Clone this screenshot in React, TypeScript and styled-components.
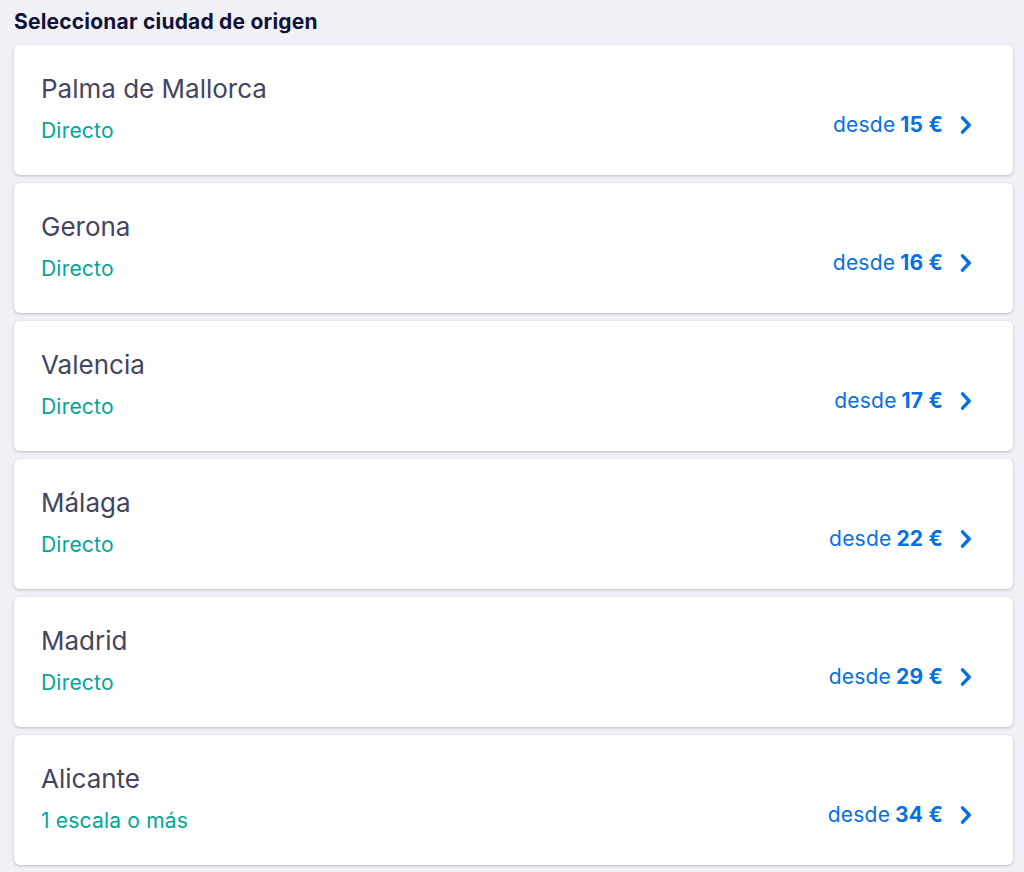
import React from 'react';
import styled, { createGlobalStyle } from 'styled-components';

const GlobalStyle = createGlobalStyle`
  html, body {
    margin: 0;
    padding: 0;
    background: #f0f1f7;
    font-family: Inter, "Noto Sans", "Liberation Sans", sans-serif;
  }
`;

interface Origin {
  city: string;
  stops: string;
  price: number;
}

const origins: Origin[] = [
  { city: 'Palma de Mallorca', stops: 'Directo', price: 15 },
  { city: 'Gerona', stops: 'Directo', price: 16 },
  { city: 'Valencia', stops: 'Directo', price: 17 },
  { city: 'Málaga', stops: 'Directo', price: 22 },
  { city: 'Madrid', stops: 'Directo', price: 29 },
  { city: 'Alicante', stops: '1 escala o más', price: 34 },
];

const Chevron: React.FC = () => (
  <ChevronSvg viewBox="0 0 12 20" aria-hidden>
    <path d="M2.5 2.8 L9.3 10 L2.5 17.2" fill="none" stroke="currentColor" strokeWidth="3.4" strokeLinecap="round" strokeLinejoin="round" />
  </ChevronSvg>
);

const OriginCard: React.FC<{ origin: Origin }> = ({ origin }) => (
  <Card>
    <Info>
      <City>{origin.city}</City>
      <Stops>{origin.stops}</Stops>
    </Info>
    <Price>
      desde <strong>{origin.price} €</strong>
      <Chevron />
    </Price>
  </Card>
);

export default function App() {
  return (
    <>
      <GlobalStyle />
      <Page>
        <Title>Seleccionar ciudad de origen</Title>
        <List>
          {origins.map((o) => (
            <OriginCard key={o.city} origin={o} />
          ))}
        </List>
      </Page>
    </>
  );
}

const Page = styled.div`
  padding: 9px 11px 7px 14px;
`;

const Title = styled.h1`
  margin: 0 0 10px;
  font-size: 21px;
  line-height: 26px;
  font-weight: 700;
  letter-spacing: 0.2px;
  color: #111236;
`;

const List = styled.div`
  display: flex;
  flex-direction: column;
  gap: 8px;
`;

const Card = styled.div`
  display: flex;
  justify-content: space-between;
  align-items: flex-end;
  height: 130px;
  box-sizing: border-box;
  padding: 28px 41px 31px 27px;
  background: #fff;
  border-radius: 6px;
  box-shadow: 0 1px 3px rgba(37, 32, 31, 0.25);
`;

const Info = styled.div`
  display: flex;
  flex-direction: column;
  align-self: stretch;
  justify-content: space-between;
`;

const City = styled.div`
  font-size: 26px;
  line-height: 32px;
  color: #444560;
`;

const Stops = styled.div`
  font-size: 21px;
  line-height: 26px;
  letter-spacing: 0.2px;
  color: #00a698;
`;

const Price = styled.div`
  display: flex;
  align-items: center;
  font-size: 21px;
  line-height: 26px;
  letter-spacing: 0.2px;
  color: #0770e3;
  margin-bottom: 6px;

  strong {
    font-weight: 700;
    margin-left: 5px;
  }
`;

const ChevronSvg = styled.svg`
  width: 12px;
  height: 20px;
  margin-left: 17px;
`;
